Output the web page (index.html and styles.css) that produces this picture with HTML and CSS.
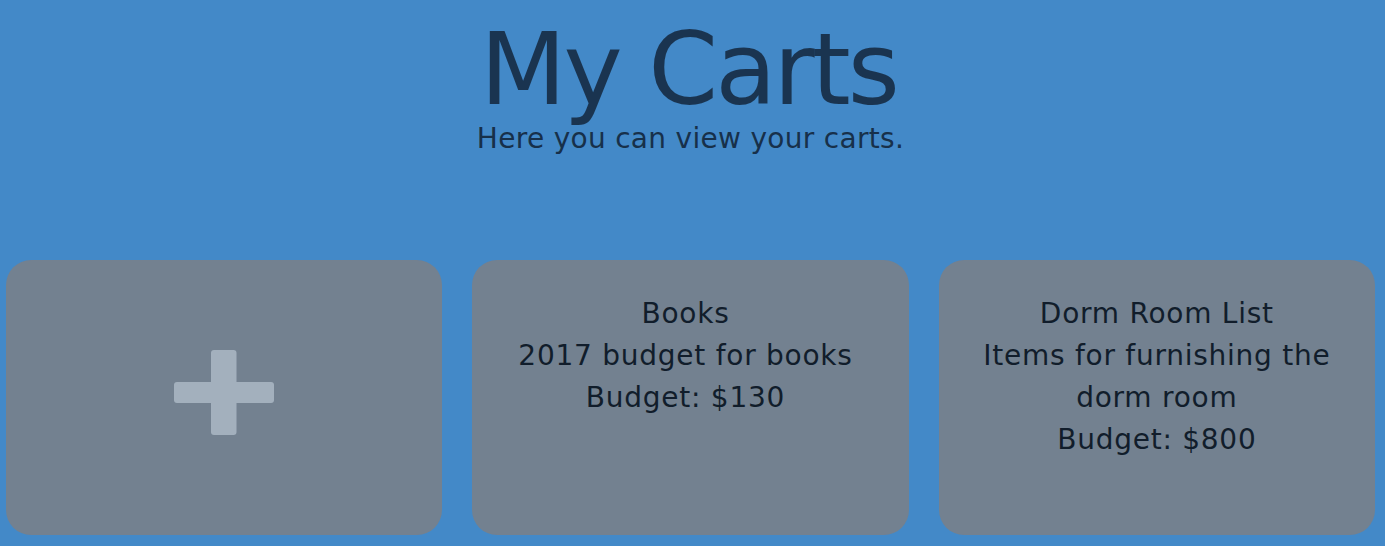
FILE: index.html
```html
<!DOCTYPE html>
<html lang="en">
<head>
<meta charset="utf-8">
<title>My Carts</title>
<link rel="stylesheet" href="styles.css">
</head>
<body>
<header class="header">
  <h1 class="title">My Carts</h1>
  <p class="subtitle">Here you can view your carts.</p>
</header>
<main class="carts">
  <div class="card card-add">
    <svg class="plus" width="100" height="85" viewBox="0 0 100 85" aria-hidden="true">
      <rect x="0" y="32" width="100" height="21" rx="3" fill="#a3b0bd"/>
      <rect x="37" y="0" width="25.5" height="85" rx="3" fill="#a3b0bd"/>
    </svg>
  </div>
  <div class="card card-shift">
    <div class="line">Books</div>
    <div class="line">2017 budget for books</div>
    <div class="line">Budget: $130</div>
  </div>
  <div class="card">
    <div class="line">Dorm Room List</div>
    <div class="line">Items for furnishing the dorm room</div>
    <div class="line">Budget: $800</div>
  </div>
</main>
</body>
</html>
```

FILE: styles.css
```css
html, body {
  margin: 0;
  padding: 0;
}
body {
  background: #4389c8;
  font-family: "DejaVu Sans", Verdana, sans-serif;
  height: 546px;
  overflow: hidden;
}
.header {
  text-align: center;
  padding-top: 14px;
  color: #1b3550;
}
.title {
  margin: 0;
  padding-right: 8px;
  font-size: 100px;
  font-weight: normal;
  line-height: 112px;
  letter-spacing: -3px;
  color: #1a3450;
}
.subtitle {
  margin: 0;
  padding-right: 4px;
  font-size: 28px;
  line-height: 26px;
  letter-spacing: 0.3px;
  color: #17304a;
}
.carts {
  display: grid;
  grid-template-columns: repeat(3, 1fr);
  gap: 30px;
  padding: 0 10px 0 6px;
  margin-top: 108px;
}
.card {
  height: 275px;
  box-sizing: border-box;
  background: #738190;
  border-radius: 25px;
  padding: 33px 30px 0;
  text-align: center;
  color: #111d2b;
  font-size: 28px;
  line-height: 42px;
  letter-spacing: 0.75px;
}
.card-shift {
  padding-right: 40px;
}
.card-add {
  display: flex;
  align-items: center;
  justify-content: center;
  padding: 0 0 10px;
}
.plus {
  display: block;
}
```
